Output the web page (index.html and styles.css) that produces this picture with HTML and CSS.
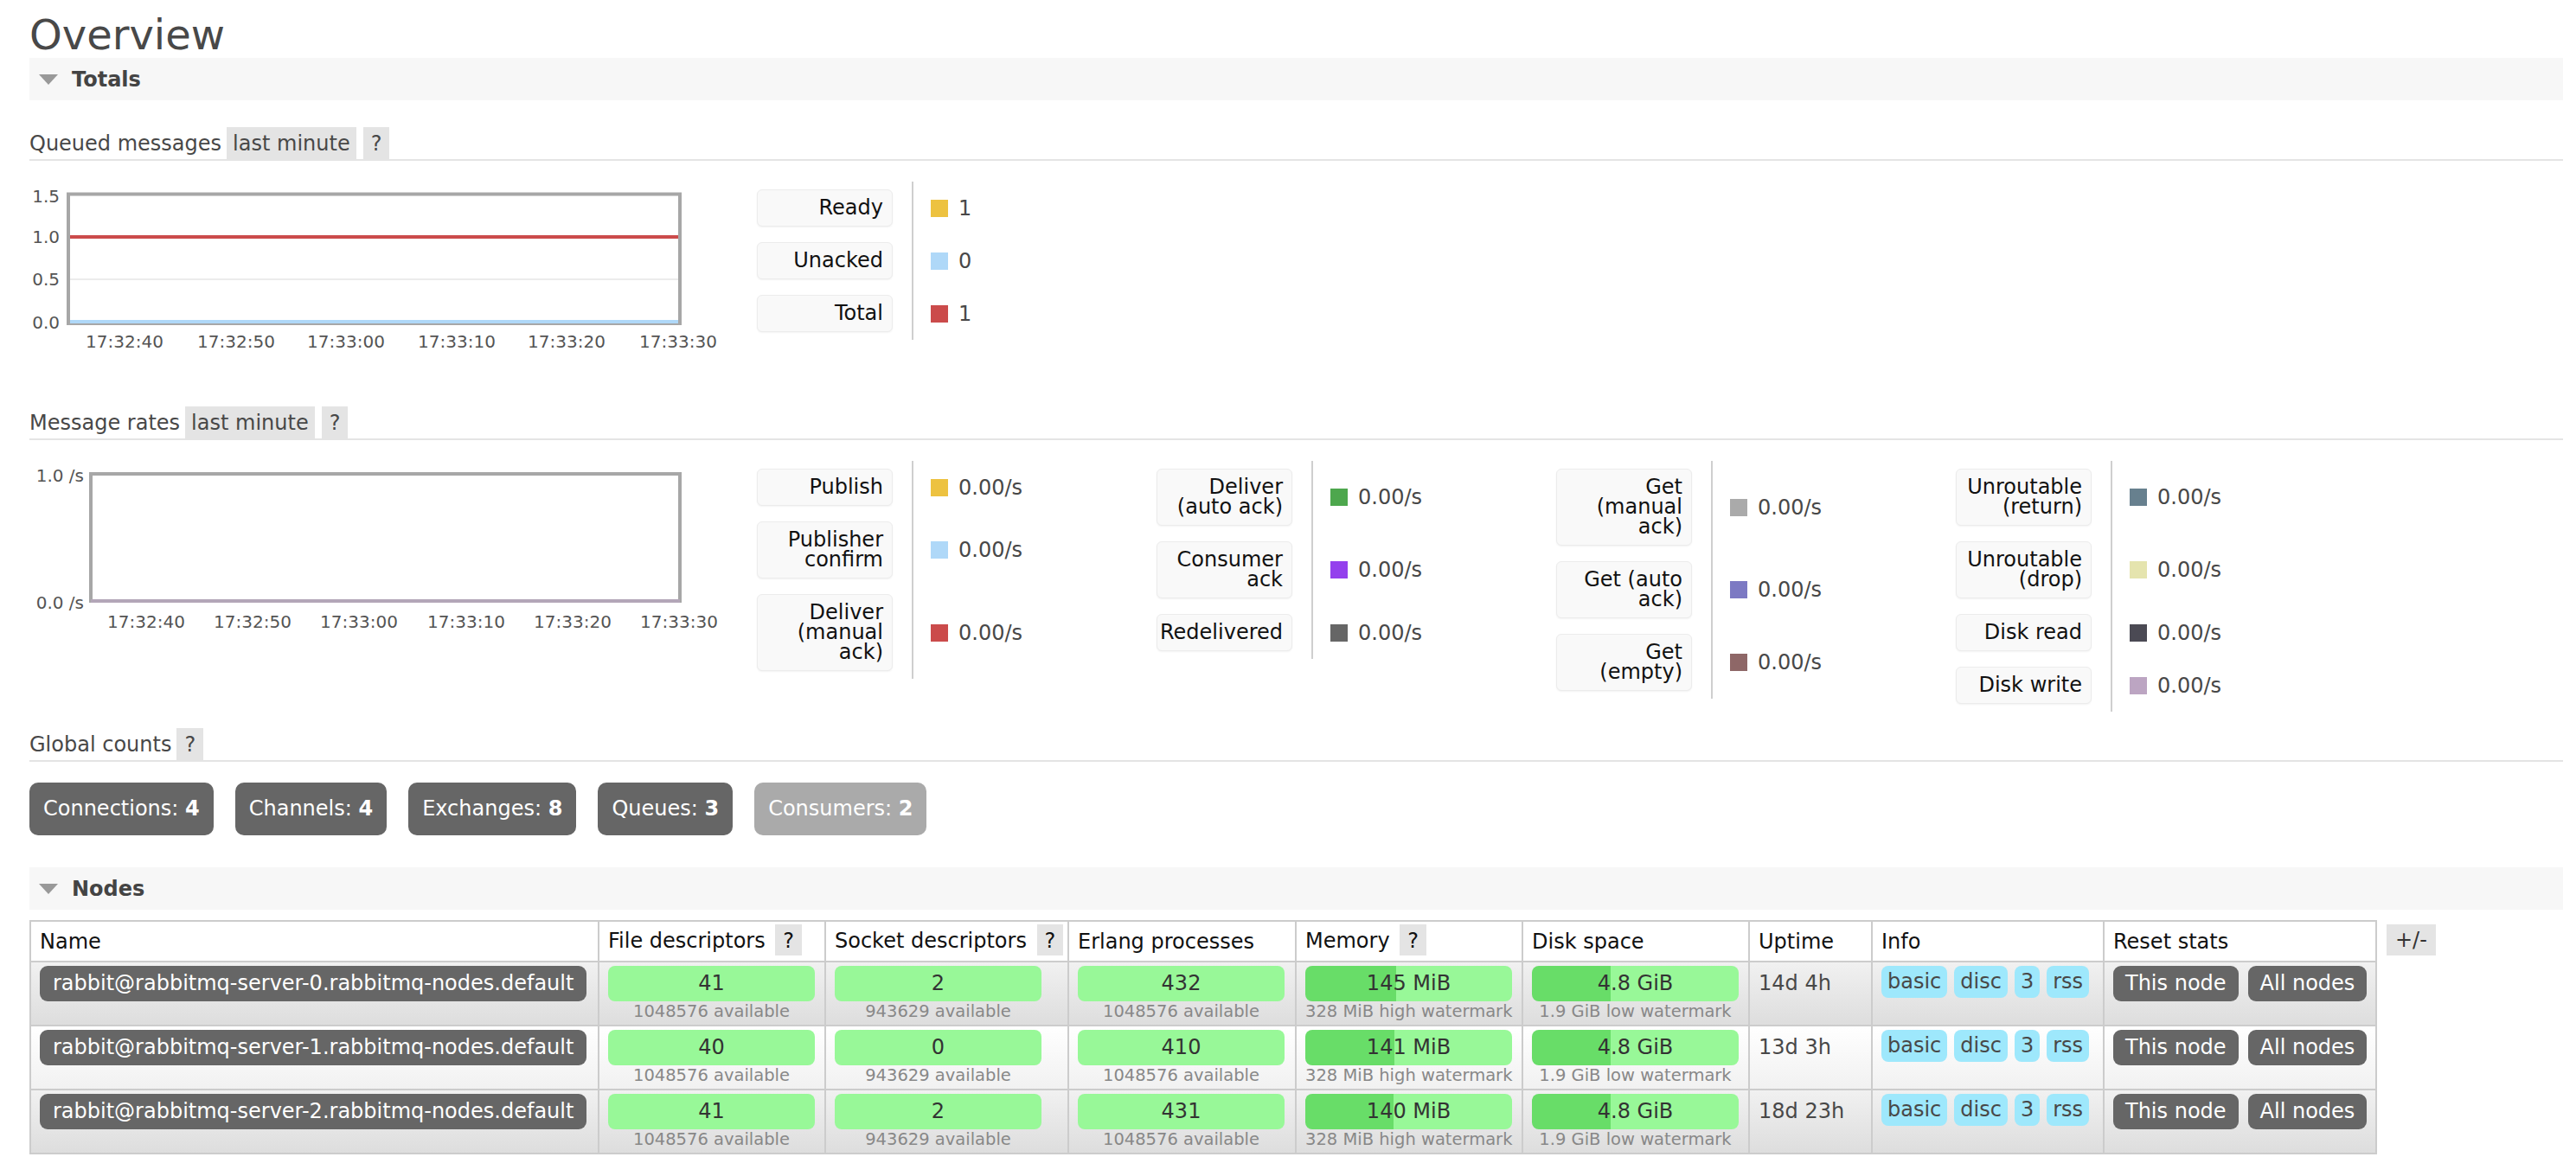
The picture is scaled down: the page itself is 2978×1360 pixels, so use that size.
FILE: index.html
```html
<!DOCTYPE html>
<html lang="en">
<head>
<meta charset="utf-8">
<title>RabbitMQ Management - Overview</title>
<link rel="stylesheet" href="styles.css">
</head>
<body>
<main class="page">
  <h1 class="title">Overview</h1>

  <section class="section">
    <h2 class="section-head"><span class="tri"></span>Totals</h2>
    <div class="section-body">

      <div class="chart-head"><span class="chart-label">Queued messages</span><span class="pill first">last minute</span><span class="pill help">?</span></div>
      <div class="chart-row">
        <div class="chart">
          <svg class="plot" width="841" height="238" viewBox="0 0 841 238">
            <line class="grid" x1="47" y1="113" x2="750" y2="113"/>
            <rect class="frame" x="45" y="14.5" width="707" height="149.5"/>
            <line class="ln c-yellow" x1="47" y1="64" x2="750" y2="64"/>
            <line class="ln c-red" x1="47" y1="64" x2="750" y2="64"/>
            <line class="ln c-blue" x1="47" y1="162" x2="750" y2="162"/>
            <text x="35" y="24" text-anchor="end">1.5</text>
            <text x="35" y="71" text-anchor="end">1.0</text>
            <text x="35" y="120" text-anchor="end">0.5</text>
            <text x="35" y="170" text-anchor="end">0.0</text>
            <text x="110" y="192" text-anchor="middle">17:32:40</text>
            <text x="239" y="192" text-anchor="middle">17:32:50</text>
            <text x="366" y="192" text-anchor="middle">17:33:00</text>
            <text x="494" y="192" text-anchor="middle">17:33:10</text>
            <text x="621" y="192" text-anchor="middle">17:33:20</text>
            <text x="750" y="192" text-anchor="middle">17:33:30</text>
          </svg>
        </div>
        <div class="legend">
          <div class="lbl"><div class="lbl-box">Ready</div></div>
          <div class="val"><span class="sw bg-yellow"></span>1</div>
          <div class="lbl"><div class="lbl-box">Unacked</div></div>
          <div class="val"><span class="sw bg-blue"></span>0</div>
          <div class="lbl"><div class="lbl-box">Total</div></div>
          <div class="val"><span class="sw bg-red"></span>1</div>
        </div>
      </div>

      <div class="chart-head"><span class="chart-label">Message rates</span><span class="pill first">last minute</span><span class="pill help">?</span></div>
      <div class="chart-row rates">
        <div class="chart">
          <svg class="plot" width="841" height="238" viewBox="0 0 841 238">
            <rect class="frame" x="71" y="15" width="681" height="147"/>
            <line class="ln c-rate0" x1="71" y1="162" x2="752" y2="162"/>
            <text x="63" y="24" text-anchor="end">1.0 /s</text>
            <text x="63" y="171" text-anchor="end">0.0 /s</text>
            <text x="135" y="193" text-anchor="middle">17:32:40</text>
            <text x="258" y="193" text-anchor="middle">17:32:50</text>
            <text x="381" y="193" text-anchor="middle">17:33:00</text>
            <text x="505" y="193" text-anchor="middle">17:33:10</text>
            <text x="628" y="193" text-anchor="middle">17:33:20</text>
            <text x="751" y="193" text-anchor="middle">17:33:30</text>
          </svg>
        </div>
        <div class="legend">
          <div class="lbl"><div class="lbl-box">Publish</div></div>
          <div class="val"><span class="sw bg-yellow"></span>0.00/s</div>
          <div class="lbl"><div class="lbl-box">Publisher confirm</div></div>
          <div class="val"><span class="sw bg-blue"></span>0.00/s</div>
          <div class="lbl"><div class="lbl-box">Deliver (manual ack)</div></div>
          <div class="val"><span class="sw bg-red"></span>0.00/s</div>
        </div>
        <div class="legend">
          <div class="lbl"><div class="lbl-box">Deliver (auto ack)</div></div>
          <div class="val"><span class="sw bg-green"></span>0.00/s</div>
          <div class="lbl"><div class="lbl-box">Consumer ack</div></div>
          <div class="val"><span class="sw bg-purple"></span>0.00/s</div>
          <div class="lbl"><div class="lbl-box">Redelivered</div></div>
          <div class="val"><span class="sw bg-grey"></span>0.00/s</div>
        </div>
        <div class="legend">
          <div class="lbl"><div class="lbl-box">Get (manual ack)</div></div>
          <div class="val"><span class="sw bg-silver"></span>0.00/s</div>
          <div class="lbl"><div class="lbl-box">Get (auto ack)</div></div>
          <div class="val"><span class="sw bg-lavender"></span>0.00/s</div>
          <div class="lbl"><div class="lbl-box">Get (empty)</div></div>
          <div class="val"><span class="sw bg-brown"></span>0.00/s</div>
        </div>
        <div class="legend">
          <div class="lbl"><div class="lbl-box">Unroutable (return)</div></div>
          <div class="val"><span class="sw bg-slate"></span>0.00/s</div>
          <div class="lbl"><div class="lbl-box">Unroutable (drop)</div></div>
          <div class="val"><span class="sw bg-cream"></span>0.00/s</div>
          <div class="lbl"><div class="lbl-box">Disk read</div></div>
          <div class="val"><span class="sw bg-dark"></span>0.00/s</div>
          <div class="lbl"><div class="lbl-box">Disk write</div></div>
          <div class="val"><span class="sw bg-mauve"></span>0.00/s</div>
        </div>
      </div>

      <div class="chart-head"><span class="chart-label">Global counts</span><span class="pill help first">?</span></div>
      <div class="counts">
        <a class="count" href="#">Connections: <b>4</b></a>
        <a class="count" href="#">Channels: <b>4</b></a>
        <a class="count" href="#">Exchanges: <b>8</b></a>
        <a class="count" href="#">Queues: <b>3</b></a>
        <a class="count dim" href="#">Consumers: <b>2</b></a>
      </div>
    </div>
  </section>

  <section class="section nodes">
    <h2 class="section-head"><span class="tri"></span>Nodes</h2>
    <div class="nodes-body">
      <table class="list">
        <colgroup>
          <col class="w-name"><col class="w-fd"><col class="w-sd"><col class="w-ep"><col class="w-mem"><col class="w-disk"><col class="w-up"><col class="w-info"><col class="w-reset">
        </colgroup>
        <thead>
          <tr>
            <th>Name</th>
            <th>File descriptors <span class="pill help th-help">?</span></th>
            <th>Socket descriptors <span class="pill help th-help">?</span></th>
            <th>Erlang processes</th>
            <th>Memory <span class="pill help th-help">?</span></th>
            <th>Disk space</th>
            <th>Uptime</th>
            <th>Info</th>
            <th>Reset stats</th>
          </tr>
        </thead>
        <tbody>
          <tr class="alt1">
            <td><span class="node">rabbit@rabbitmq-server-0.rabbitmq-nodes.default</span></td>
            <td><div class="bar">41</div><div class="sub">1048576 available</div></td>
            <td><div class="bar">2</div><div class="sub">943629 available</div></td>
            <td><div class="bar">432</div><div class="sub">1048576 available</div></td>
            <td><div class="bar split" style="--f: 44%">145 MiB</div><div class="sub">328 MiB high watermark</div></td>
            <td><div class="bar split" style="--f: 38%">4.8 GiB</div><div class="sub">1.9 GiB low watermark</div></td>
            <td class="uptime">14d 4h</td>
            <td class="info"><span class="badge">basic</span><span class="badge">disc</span><span class="badge">3</span><span class="badge">rss</span></td>
            <td class="reset"><span class="btn">This node</span><span class="btn">All nodes</span></td>
          </tr>
          <tr class="alt2">
            <td><span class="node">rabbit@rabbitmq-server-1.rabbitmq-nodes.default</span></td>
            <td><div class="bar">40</div><div class="sub">1048576 available</div></td>
            <td><div class="bar">0</div><div class="sub">943629 available</div></td>
            <td><div class="bar">410</div><div class="sub">1048576 available</div></td>
            <td><div class="bar split" style="--f: 43.3%">141 MiB</div><div class="sub">328 MiB high watermark</div></td>
            <td><div class="bar split" style="--f: 38%">4.8 GiB</div><div class="sub">1.9 GiB low watermark</div></td>
            <td class="uptime">13d 3h</td>
            <td class="info"><span class="badge">basic</span><span class="badge">disc</span><span class="badge">3</span><span class="badge">rss</span></td>
            <td class="reset"><span class="btn">This node</span><span class="btn">All nodes</span></td>
          </tr>
          <tr class="alt1">
            <td><span class="node">rabbit@rabbitmq-server-2.rabbitmq-nodes.default</span></td>
            <td><div class="bar">41</div><div class="sub">1048576 available</div></td>
            <td><div class="bar">2</div><div class="sub">943629 available</div></td>
            <td><div class="bar">431</div><div class="sub">1048576 available</div></td>
            <td><div class="bar split" style="--f: 42.7%">140 MiB</div><div class="sub">328 MiB high watermark</div></td>
            <td><div class="bar split" style="--f: 38%">4.8 GiB</div><div class="sub">1.9 GiB low watermark</div></td>
            <td class="uptime">18d 23h</td>
            <td class="info"><span class="badge">basic</span><span class="badge">disc</span><span class="badge">3</span><span class="badge">rss</span></td>
            <td class="reset"><span class="btn">This node</span><span class="btn">All nodes</span></td>
          </tr>
        </tbody>
      </table>
      <span class="plusminus">+/-</span>
    </div>
  </section>
</main>
</body>
</html>
```

FILE: styles.css
```css
* { box-sizing: border-box; }

html, body {
  margin: 0;
  padding: 0;
  background: #fff;
}

body {
  font-family: "DejaVu Sans", Verdana, sans-serif;
  font-size: 24px;
  color: #484848;
}

.page {
  padding: 13px 15px 20px 34px;
}

.title {
  margin: 0;
  font-size: 48px;
  font-weight: normal;
  line-height: 54px;
  color: #484848;
}

/* collapsible section headers */
.section-head {
  margin: 0;
  height: 49px;
  display: flex;
  align-items: center;
  padding-left: 11px;
  background: #f7f7f7;
  font-size: 24px;
  font-weight: bold;
  color: #444;
}

.tri {
  width: 0;
  height: 0;
  border-left: 11px solid transparent;
  border-right: 11px solid transparent;
  border-top: 12px solid #999;
  margin-right: 16px;
}

.section-body {
  padding-top: 31px;
}

/* chart headings */
.chart-head {
  display: flex;
  align-items: baseline;
  border-bottom: 2px solid #e4e4e4;
}

.chart-label {
  line-height: 29px;
}

.pill {
  background: #e4e4e4;
  padding: 5px 7px 3px;
  line-height: 29px;
  margin-left: 8px;
}

.pill.first { margin-left: 6px; }

.pill.help {
  padding-left: 9px;
  padding-right: 9px;
}

.chart-row {
  display: flex;
  align-items: flex-start;
  margin-top: 24px;
  margin-bottom: 22px;
}

.chart-row.rates { margin-bottom: 19px; }

.chart {
  width: 841px;
  height: 238px;
  flex: none;
}

.plot { display: block; }

.plot text {
  font-family: "DejaVu Sans", Verdana, sans-serif;
  font-size: 20px;
  fill: #545454;
}

.plot .frame {
  fill: none;
  stroke: #a7a7a7;
  stroke-width: 4;
}

.plot .grid {
  stroke: #ececec;
  stroke-width: 2;
}

.plot .ln { stroke-width: 4; }
.plot .c-yellow { stroke: #edc240; }
.plot .c-red { stroke: #cb4b4b; }
.plot .c-blue { stroke: #afd8f8; }
.plot .c-rate0 { stroke: #b3a6b8; }

/* legends */
.legend {
  display: grid;
  grid-template-columns: 179px 283px;
  flex: none;
}

.lbl {
  padding: 9px 22px 9px 0;
}

.lbl-box {
  width: 157px;
  padding: 9px 10px 9px 3px;
  border: 1px solid #ececec;
  border-radius: 6px;
  background: #f9f9f9;
  box-shadow: 0 1px 2px rgba(0, 0, 0, 0.05);
  text-align: right;
  line-height: 23px;
  color: #111;
}

.val {
  border-left: 2px solid #cfcfcf;
  padding-left: 20px;
  display: flex;
  align-items: center;
  color: #484848;
}

.sw {
  width: 20px;
  height: 20px;
  margin-right: 12px;
  flex: none;
}

.bg-yellow { background: #edc240; }
.bg-blue { background: #afd8f8; }
.bg-red { background: #cb4b4b; }
.bg-green { background: #4da74d; }
.bg-purple { background: #9440ed; }
.bg-grey { background: #666666; }
.bg-silver { background: #aaaaaa; }
.bg-lavender { background: #7c79c3; }
.bg-brown { background: #8e6767; }
.bg-slate { background: #67808e; }
.bg-cream { background: #e5e4ae; }
.bg-dark { background: #4b4a54; }
.bg-mauve { background: #bca5c2; }

/* global counts */
.counts {
  display: flex;
  gap: 25px;
  margin-top: 24px;
}

.count {
  height: 61px;
  line-height: 61px;
  padding: 0 16px;
  background: #666;
  color: #fff;
  border-radius: 10px;
  text-decoration: none;
}

.count.dim { background: #aaa; }

/* nodes */
.nodes { margin-top: 37px; }

.nodes-body {
  display: flex;
  align-items: flex-start;
  gap: 11px;
  margin-top: 12px;
}

table.list {
  border-collapse: collapse;
  table-layout: fixed;
  width: 2712px;
  flex: none;
}

.w-name { width: 657px; }
.w-fd { width: 262px; }
.w-sd { width: 281px; }
.w-ep { width: 263px; }
.w-mem { width: 262px; }
.w-disk { width: 262px; }
.w-up { width: 142px; }
.w-info { width: 268px; }
.w-reset { width: 315px; }

table.list th {
  height: 47px;
  padding: 0 10px;
  text-align: left;
  font-weight: normal;
  color: #111;
  vertical-align: middle;
  border: 2px solid #ccc;
  background: #fff;
  white-space: nowrap;
}

.th-help { margin-left: 4px; }

table.list td {
  height: 74px;
  padding: 4px 10px 0;
  vertical-align: top;
  border: 2px solid #ccc;
  white-space: nowrap;
}

tr.alt1 { background: linear-gradient(#f1f1f1, #dddddd); }
tr.alt2 { background: linear-gradient(#ffffff, #f1f1f1); }

.node {
  display: inline-block;
  height: 41px;
  line-height: 41px;
  padding: 0 15px;
  background: #666;
  color: #fff;
  border-radius: 9px;
}

.bar {
  width: 239px;
  height: 41px;
  line-height: 41px;
  text-align: center;
  background: #98f898;
  border-radius: 8px;
  color: #333;
}

.bar.split {
  background: linear-gradient(to right, #68dd68 var(--f), #98f898 var(--f));
}

.sub {
  width: 239px;
  text-align: center;
  font-size: 19.5px;
  line-height: 23px;
  color: #888;
}

td.uptime {
  padding-left: 19px;
  line-height: 41px;
  color: #484848;
}

td.info { padding-left: 12px; }

.badge {
  display: inline-block;
  height: 37px;
  line-height: 37px;
  padding: 0 7px;
  margin-right: 8px;
  background: #9ee8fc;
  border-radius: 8px;
  color: #484848;
}

.badge:last-child { margin-right: 0; }

td.reset { padding-left: 12px; }

.btn {
  display: inline-block;
  height: 41px;
  line-height: 41px;
  padding: 0 14px;
  margin-right: 11px;
  background: #666;
  color: #fff;
  border-radius: 9px;
}

.btn:last-child { margin-right: 0; }

.plusminus {
  margin-top: 5px;
  height: 36px;
  line-height: 36px;
  padding: 0 10px;
  background: #e4e4e4;
  color: #333;
}
```
